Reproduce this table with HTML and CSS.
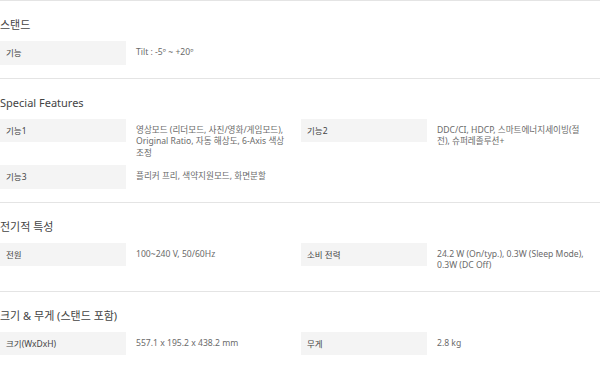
FILE: index.html
```html
<!DOCTYPE html>
<html lang="ko">
<head>
<meta charset="utf-8">
<link rel="stylesheet" href="styles.css">
</head>
<body>
<div class="specs">
  <section class="sec">
    <h3 class="title">스탠드</h3>
    <div class="grid">
      <div class="item"><div class="label">기능</div><div class="value">Tilt : -5º ~ +20º</div></div>
    </div>
  </section>
  <section class="sec">
    <h3 class="title">Special Features</h3>
    <div class="grid">
      <div class="item"><div class="label">기능1</div><div class="value">영상모드 (리더모드, 사진/영화/게임모드), Original Ratio, 자동 해상도, 6-Axis 색상 <span class="keep">조정</span></div></div>
      <div class="item"><div class="label">기능2</div><div class="value">DDC/CI, HDCP, 스마트에너지세이빙(절전), 슈퍼레졸루션+</div></div>
      <div class="item"><div class="label">기능3</div><div class="value">플리커 프리, 색약지원모드, 화면분할</div></div>
    </div>
  </section>
  <section class="sec">
    <h3 class="title">전기적 특성</h3>
    <div class="grid">
      <div class="item"><div class="label">전원</div><div class="value">100~240 V, 50/60Hz</div></div>
      <div class="item"><div class="label">소비 전력</div><div class="value">24.2 W (On/typ.), 0.3W (Sleep Mode), 0.3W (DC Off)</div></div>
    </div>
  </section>
  <section class="sec">
    <h3 class="title">크기 &amp; 무게 (스탠드 포함)</h3>
    <div class="grid">
      <div class="item"><div class="label">크기(WxDxH)</div><div class="value">557.1 x 195.2 x 438.2 mm</div></div>
      <div class="item"><div class="label">무게</div><div class="value">2.8 kg</div></div>
    </div>
  </section>
</div>
</body>
</html>
```

FILE: styles.css
```css
html, body {
  margin: 0;
  padding: 0;
  background: #fff;
}
body {
  font-family: "Noto Sans", "Noto Sans CJK KR", sans-serif;
  width: 600px;
}
.sec {
  border-top: 1px solid #e4e4e4;
  padding: 17px 0 13px;
}
.title {
  margin: 0 0 9px;
  font-size: 11px;
  line-height: 14px;
  font-weight: 400;
  color: #444;
}
.grid {
  display: grid;
  grid-template-columns: 297px 290px;
  column-gap: 4px;
}
.item {
  display: flex;
  align-items: flex-start;
}
.label {
  width: 126px;
  flex: none;
  box-sizing: border-box;
  background: #f4f4f4;
  padding: 6px 0 6px 6px;
  font-size: 8.5px;
  line-height: 11.5px;
  color: #444;
}
.value {
  flex: 1;
  padding: 6px 0 6px 10px;
  font-size: 8.6px;
  line-height: 11.5px;
  color: #6a6a6a;
}
.keep {
  white-space: nowrap;
}
```
